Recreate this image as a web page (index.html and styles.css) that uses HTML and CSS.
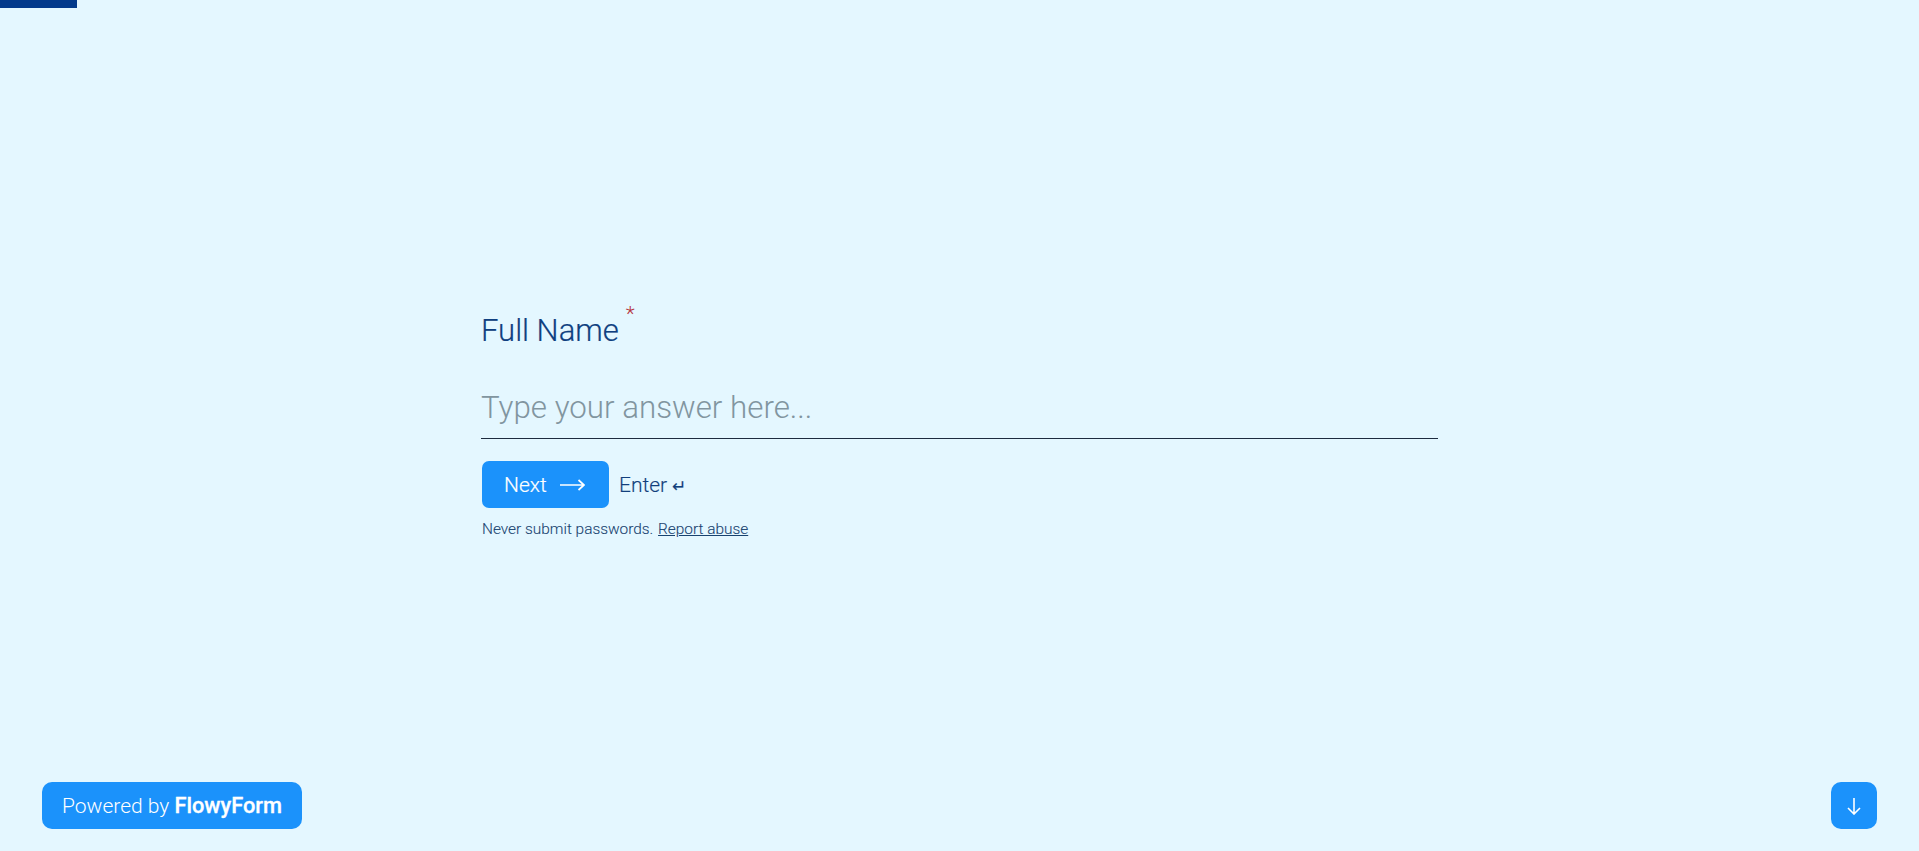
FILE: index.html
```html
<!DOCTYPE html>
<html lang="en">
<head>
<meta charset="utf-8">
<title>Full Name</title>
<link rel="stylesheet" href="styles.css">
</head>
<body>
<div class="progress"></div>
<main class="stage">
  <form class="question">
    <label class="label" for="answer">Full Name<sup class="req">*</sup></label>
    <input class="answer" id="answer" type="text" placeholder="Type your answer here...">
    <div class="actions">
      <button class="next" type="button">Next
        <svg class="next-arrow" width="25" height="12" viewBox="0 0 25 12" fill="none" stroke="#fff" stroke-width="1.7"><path d="M0 6H24M18.500 1 24 6l-5.500 5"/></svg>
      </button>
      <span class="hint">Enter <span class="hint-key">↵</span></span>
    </div>
    <p class="note">Never submit passwords. <a class="abuse" href="#">Report abuse</a></p>
  </form>
</main>
<footer class="footer">
  <a class="brand" href="#">Powered by <b class="brand-name">FlowyForm</b></a>
  <button class="down" type="button" aria-label="Next question">
    <svg width="14" height="18" viewBox="0 0 14 18" fill="none" stroke="#fff" stroke-width="1.6"><path d="M7 1V17M1 11l6 6 6-6"/></svg>
  </button>
</footer>
</body>
</html>
```
FILE: styles.css
```css
* { box-sizing: border-box; }
html, body { height: 100%; }
body {
  margin: 0;
  background: #e4f7ff;
  font-family: "Roboto", "Liberation Sans", sans-serif;
  color: #123f7c;
  display: flex;
  flex-direction: column;
  overflow: hidden;
}
.progress { width: 77px; height: 8px; background: #033a8b; flex: none; }
.stage { flex: 1; display: flex; justify-content: center; align-items: flex-start; padding: 298px 0 0; min-height: 0; }
.question { width: 957px; }
.label { display: block; font-size: 31px; font-weight: 300; line-height: 50px; color: #0f3f80; -webkit-text-stroke: 0.2px #0f3f80; }
.req { color: #b5343c; font-size: 21px; line-height: 0; vertical-align: 20px; margin-left: 7px; -webkit-text-stroke: 0; }
.answer {
  display: block;
  width: 100%;
  height: 61px;
  margin-top: 22px;
  padding: 0 0 2px;
  border: 0;
  border-bottom: 1px solid #1d2b3f;
  background: transparent;
  outline: 0;
  font: 300 31.300px "Roboto", "Liberation Sans", sans-serif;
  color: #123f7c;
}
.answer::placeholder { color: #81959f; opacity: 1; }
.actions { display: flex; align-items: center; gap: 10px; margin-top: 22px; }
.next {
  display: flex; align-items: center; gap: 13px;
  width: 127px; height: 47px; margin-left: 1px; padding: 0 0 0 22px;
  border: 0; border-radius: 7px; background: #1b92fb; color: #fff;
  font: 300 21px "Roboto", "Liberation Sans", sans-serif;
  -webkit-text-stroke: 0.2px #fff;
}
.hint { font-size: 21px; font-weight: 300; color: #123f7c; -webkit-text-stroke: 0.15px #123f7c; }
.hint-key { font-size: 17px; }
.note { margin: 9px 0 0 1px; font-size: 15.400px; font-weight: 300; color: #17426f; line-height: 24px; -webkit-text-stroke: 0.1px #17426f; }
.abuse { color: #17426f; margin-left: 1px; }
.footer { flex: none; display: flex; justify-content: space-between; align-items: center; padding: 0 42px 22px; }
.brand {
  display: flex; align-items: center; height: 47px; width: 260px;
  padding-left: 20px; border-radius: 10px; background: #1b92fb; color: #fff;
  font-size: 21px; font-weight: 300; text-decoration: none; white-space: pre;
}
.brand-name { font-weight: 500; font-size: 21.800px; -webkit-text-stroke: 0.3px #fff; }
.down {
  display: flex; align-items: center; justify-content: center;
  width: 46px; height: 47px; padding: 0; border: 0; border-radius: 10px; background: #1b92fb;
}
```
